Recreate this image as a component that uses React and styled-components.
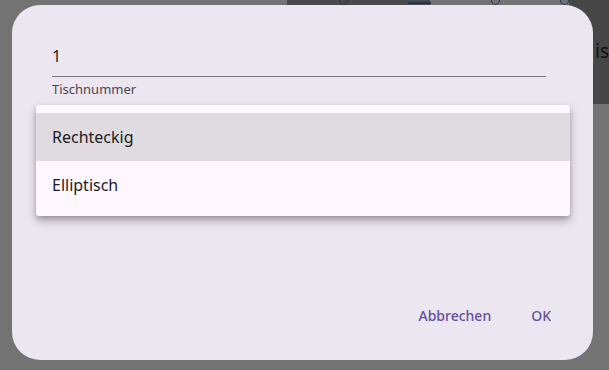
import React from 'react';
import styled, { createGlobalStyle } from 'styled-components';

const GlobalStyle = createGlobalStyle`
  html, body {
    margin: 0;
    padding: 0;
    width: 609px;
    height: 370px;
    overflow: hidden;
    background: #737373;
    font-family: "Noto Sans", "Open Sans", sans-serif;
  }
`

const options = ['Rechteckig', 'Elliptisch']

export default function App() {
  return (
    <>
      <GlobalStyle />
      <StyPage>
        <StyBackdrop>
          <StyTopStrip>
            <StyDot />
            <StyBar />
            <StyDot />
            <StyDot />
          </StyTopStrip>
          <StySidePanel>isc</StySidePanel>
        </StyBackdrop>

        <StyDialog>
          <StyField>
            <StyValue>1</StyValue>
            <StyLabel>Tischnummer</StyLabel>
          </StyField>
          <StyActions>
            <StyTextButton>Abbrechen</StyTextButton>
            <StyTextButton>OK</StyTextButton>
          </StyActions>

          <StyMenu>
            {options.map((o, i) => (
              <StyMenuItem key={o} $active={i === 0}>{o}</StyMenuItem>
            ))}
          </StyMenu>
        </StyDialog>
      </StyPage>
    </>
  );
}

// Styled Components

const StyPage = styled.div`
  position: relative;
  width: 609px;
  height: 370px;
  background: #737373;
`

const StyBackdrop = styled.div`
  display: flex;
  justify-content: flex-end;
  height: 104px;
`

const StyTopStrip = styled.div`
  display: flex;
  align-items: flex-start;
  gap: 60px;
  height: 5px;
  width: 230px;
  background: linear-gradient(to right, #737373 0 32px, #4a4a4a 32px 175px, #737373 175px);
  overflow: hidden;
  padding-left: 84px;
`

const StyDot = styled.span`
  display: block;
  width: 8px;
  height: 8px;
  margin-top: -5px;
  border: 1.5px solid #1f3550;
  border-radius: 50%;
`

const StyBar = styled.span`
  display: block;
  width: 26px;
  height: 2px;
  margin-top: 2px;
  background: #1f3550;
`

const StySidePanel = styled.div`
  width: 40px;
  height: 104px;
  background: #474747;
  color: #111;
  font-size: 19px;
  line-height: 1;
  padding-top: 42px;
  box-sizing: border-box;
  padding-left: 26px;
  white-space: nowrap;
  overflow: hidden;
`

const StyDialog = styled.section`
  position: absolute;
  left: 12px;
  top: 5px;
  width: 581px;
  height: 355px;
  box-sizing: border-box;
  background: #ece6f0;
  border-radius: 28px;
  padding: 40px 47px 24px 40px;
  display: flex;
  flex-direction: column;
  justify-content: space-between;
`

const StyField = styled.div`
  display: flex;
  flex-direction: column;
`

const StyValue = styled.div`
  font-size: 16px;
  color: #1d1b20;
  line-height: 22px;
  padding-bottom: 9px;
  border-bottom: 1px solid #79747e;
`

const StyLabel = styled.div`
  font-size: 13px;
  color: #49454f;
  line-height: 16px;
  margin-top: 4px;
`

const StyActions = styled.div`
  display: flex;
  justify-content: flex-end;
  gap: 16px;
  margin-right: -17px;
`

const StyTextButton = styled.button`
  border: none;
  background: transparent;
  font-family: "Noto Sans", "Open Sans", sans-serif;
  font-size: 14px;
  font-weight: 500;
  color: #65509f;
  padding: 10px 12px;
  line-height: 20px;
  border-radius: 20px;
  cursor: pointer;
`

const StyMenu = styled.ul`
  position: absolute;
  left: 24px;
  top: 100px;
  width: 534px;
  margin: 0;
  padding: 8px 0 7px;
  list-style: none;
  background: #fef7ff;
  border-radius: 3px;
  box-shadow: 0 5px 10px rgba(0,0,0,0.28), 0 2px 4px rgba(0,0,0,0.14);
`

const StyMenuItem = styled.li`
  height: 48px;
  display: flex;
  align-items: center;
  padding: 0 16px;
  font-size: 16px;
  color: #1d1b20;
  background: ${p => p.$active ? '#e0dbe1' : 'transparent'};
`
